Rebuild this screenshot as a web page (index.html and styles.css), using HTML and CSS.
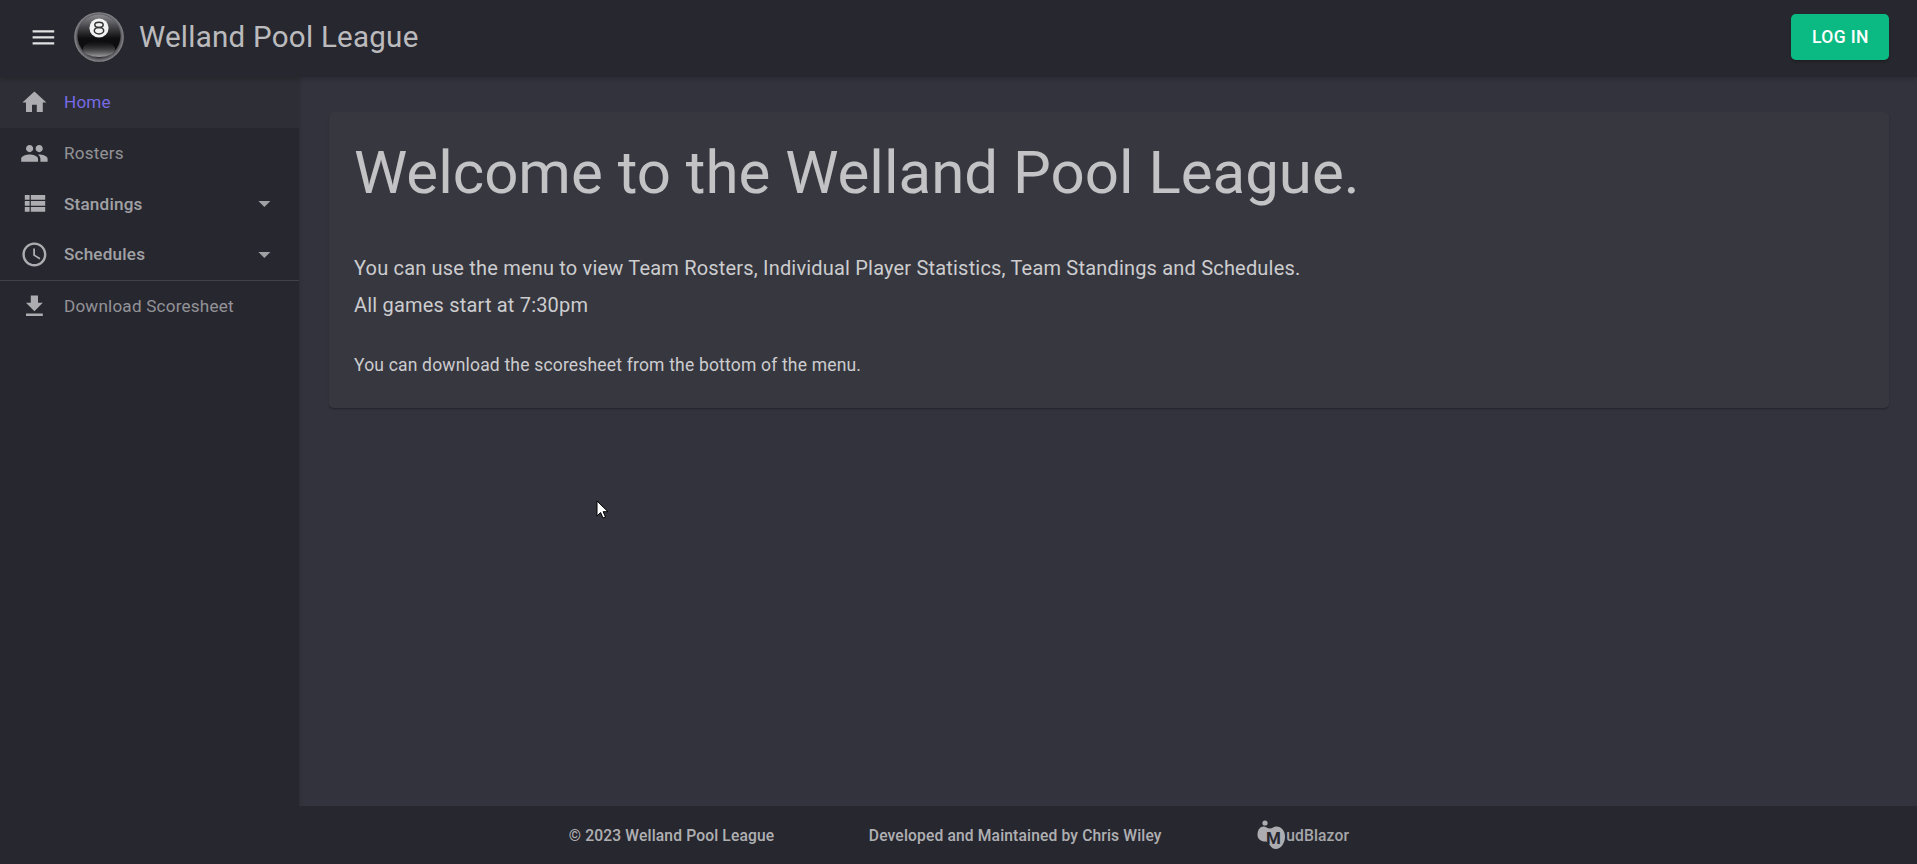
FILE: index.html
```html
<!DOCTYPE html>
<html lang="en">
<head>
<meta charset="utf-8">
<title>Welland Pool League</title>
<link rel="stylesheet" href="styles.css">
</head>
<body>
<div class="app">
  <header class="appbar">
    <button class="menu-btn" aria-label="Menu">
      <svg class="icon bar-icon" viewBox="0 0 24 24"><path d="M3 18h18v-2H3v2zm0-5h18v-2H3v2zm0-7v2h18V6H3z"/></svg>
    </button>
    <svg class="ball" viewBox="0 0 50 50" aria-hidden="true">
      <defs>
        <radialGradient id="ballRim" cx="50%" cy="50%" r="50%">
          <stop offset="0.86" stop-color="#4a4a4e"/>
          <stop offset="1" stop-color="#8c8c90"/>
        </radialGradient>
        <linearGradient id="ballShine" x1="0" y1="0" x2="0" y2="1">
          <stop offset="0" stop-color="#8a8a8e"/>
          <stop offset="0.28" stop-color="#48484c"/>
          <stop offset="0.56" stop-color="#0e0e10"/>
          <stop offset="1" stop-color="#0c0c0e"/>
        </linearGradient>
        <linearGradient id="ballGlow" x1="0" y1="0" x2="0" y2="1">
          <stop offset="0" stop-color="#333" stop-opacity="0"/>
          <stop offset="1" stop-color="#a0a0a4"/>
        </linearGradient>
      </defs>
      <circle cx="25" cy="25" r="24.800" fill="url(#ballRim)"/>
      <circle cx="25" cy="24" r="21.500" fill="url(#ballShine)"/>
      <ellipse cx="25" cy="37" rx="16" ry="8" fill="url(#ballGlow)"/>
      <circle cx="25" cy="16" r="9.600" fill="#f2f2f2"/>
      <ellipse cx="25" cy="12.800" rx="4.200" ry="2.600" fill="none" stroke="#333" stroke-width="1.500"/>
      <ellipse cx="25" cy="18.700" rx="4.700" ry="3.200" fill="none" stroke="#333" stroke-width="1.500"/>
    </svg>
    <span class="brand">Welland Pool League</span>
    <a class="login" href="#">Log in</a>
  </header>

  <nav class="drawer">
    <a class="nav-row active" href="#">
      <svg class="icon" viewBox="0 0 24 24"><path d="M10 20v-6h4v6h5v-8h3L12 3 2 12h3v8z"/></svg>
      <span class="nav-text">Home</span>
    </a>
    <a class="nav-row" href="#">
      <svg class="icon" viewBox="0 0 24 24"><path d="M16 11c1.66 0 2.99-1.34 2.99-3S17.66 5 16 5c-1.66 0-3 1.34-3 3s1.34 3 3 3zm-8 0c1.66 0 2.99-1.34 2.99-3S9.66 5 8 5C6.34 5 5 6.34 5 8s1.34 3 3 3zm0 2c-2.33 0-7 1.17-7 3.5V19h14v-2.5c0-2.33-4.67-3.5-7-3.5zm8 0c-.29 0-.62.02-.97.05 1.16.84 1.97 1.97 1.97 3.45V19h6v-2.5c0-2.33-4.67-3.5-7-3.5z"/></svg>
      <span class="nav-text">Rosters</span>
    </a>
    <a class="nav-row" href="#">
      <svg class="icon" viewBox="0 0 24 24"><path d="M4 14h4v-4H4v4zm0 5h4v-4H4v4zM4 9h4V5H4v4zm5 5h12v-4H9v4zm0 5h12v-4H9v4zM9 5v4h12V5H9z"/></svg>
      <span class="nav-text group">Standings</span>
      <svg class="icon caret" viewBox="0 0 24 24"><path d="M7 10l5 5 5-5z"/></svg>
    </a>
    <a class="nav-row" href="#">
      <svg class="icon" viewBox="0 0 24 24"><path d="M11.99 2C6.47 2 2 6.48 2 12s4.47 10 9.99 10C17.52 22 22 17.52 22 12S17.52 2 11.99 2zM12 20c-4.42 0-8-3.58-8-8s3.58-8 8-8 8 3.58 8 8-3.58 8-8 8zm.5-13H11v6l5.25 3.15.75-1.23-4.5-2.67z"/></svg>
      <span class="nav-text group">Schedules</span>
      <svg class="icon caret" viewBox="0 0 24 24"><path d="M7 10l5 5 5-5z"/></svg>
    </a>
    <hr class="nav-divider">
    <a class="nav-row" href="#">
      <svg class="icon" viewBox="0 0 24 24"><path d="M19 9h-4V3H9v6H5l7 7 7-7zM5 18v2h14v-2H5z"/></svg>
      <span class="nav-text">Download Scoresheet</span>
    </a>
  </nav>

  <main class="content">
    <section class="card">
      <h1 class="headline">Welcome to the Welland Pool League.</h1>
      <p class="body-lg first">You can use the menu to view Team Rosters, Individual Player Statistics, Team Standings and Schedules.</p>
      <p class="body-lg">All games start at 7:30pm</p>
      <p class="body-sm">You can download the scoresheet from the bottom of the menu.</p>
    </section>
  </main>

  <footer class="footer">
    <span>© 2023 Welland Pool League</span>
    <span>Developed and Maintained by Chris Wiley</span>
    <span class="mud">
      <svg class="mud-logo" viewBox="0 0 30 30" aria-hidden="true">
        <circle cx="8" cy="3" r="2.600" fill="#adadb1"/>
        <path d="M0.500 15c0-5 2.500-8.500 6-8.500 2.500 0 3.500 2 6.500 2 2.500 0 3.500-2 6.500-2 5 0 8.500 4.500 8.500 10 0 7-4.500 12.500-9 12.500-5 0-6.500-5-8-6.500-1-1-2-1-3-1-4 0-7.500-2.500-7.500-6.500z" fill="#adadb1"/>
        <text x="16.500" y="23.500" class="mud-m">M</text>
      </svg><span>udBlazor</span>
    </span>
  </footer>
</div>
<svg class="cursor" viewBox="0 0 12 19" aria-hidden="true"><path d="M1 1v15l3.600-3.500 2.400 5.500 2.500-1-2.400-5.300H12z" fill="#fff" stroke="#000" stroke-width="1"/></svg>
</body>
</html>
```

FILE: styles.css
```css
* { box-sizing: border-box; }
html, body { margin: 0; height: 100%; overflow: hidden; }
body {
  font-family: Roboto, "Liberation Sans", sans-serif;
  background: #32333d;
  color: rgba(255,255,255,.7);
}
.app {
  display: grid;
  grid-template-columns: 299px 1fr;
  grid-template-rows: 77px 1fr 58px;
  height: 864px;
}
.icon { width: 28.8px; height: 28.8px; fill: currentColor; flex: none; display: block; }

.appbar {
  grid-column: 1 / -1;
  display: flex;
  align-items: center;
  background: #27272f;
  padding: 0 27.6px 3px 29.4px;
  box-shadow: 0 2px 5px rgba(0,0,0,.2);
  position: relative;
  z-index: 2;
}
.menu-btn { background: none; border: 0; padding: 0; color: #e2e2e4; display: flex; width: 29px; }
.ball { width: 50px; height: 50px; margin-left: 16px; margin-top: -1px; flex: none; }
.brand { font-size: 29.5px; line-height: 1.6; margin: 1px 0 0 14.5px; letter-spacing: .009em; color: rgba(255,255,255,.7); }
.login {
  margin-left: auto;
  background: #0bba83;
  color: #fff;
  font-size: 17.5px;
  font-weight: 500;
  text-transform: uppercase;
  text-decoration: none;
  letter-spacing: .02em;
  height: 46px;
  width: 98px;
  display: flex;
  align-items: center;
  justify-content: center;
  border-radius: 4.8px;
  box-shadow: 0 3px 2px -2px rgba(0,0,0,.2), 0 2px 3px rgba(0,0,0,.14);
}

.drawer {
  background: #27272f;
  display: flex;
  flex-direction: column;
  box-shadow: 0 1px 4px rgba(0,0,0,.18);
  z-index: 1;
}
.nav-row {
  display: flex;
  align-items: center;
  height: 50.7px;
  padding: 0 20.5px 0 19.7px;
  color: #adadb1;
  text-decoration: none;
  flex: none;
}
.nav-row.active { background: rgba(255,255,255,.035); }
.nav-row.active .nav-text { color: #776be7; }
.nav-text {
  margin-left: 15.5px;
  font-size: 17.1px;
  letter-spacing: .012em;
  color: rgba(255,255,255,.5);
}
.nav-text.group { font-weight: 500; color: rgba(255,255,255,.58); }
.caret { margin-left: auto; color: #a0a0a5; }
.nav-divider { margin: 0; border: 0; border-top: 1px solid rgba(255,255,255,.12); height: 0; }

.content { padding: 35px 27.6px 0 30px; min-width: 0; }
.card {
  background: #373740;
  border-radius: 4.8px;
  box-shadow: 0 2px 2px -1px rgba(0,0,0,.2), 0 1px 2px rgba(0,0,0,.14);
  height: 296px;
  padding: 26px 25px 0;
}
.headline { margin: 0; font-size: 60px; font-weight: 400; line-height: 70px; color: rgba(255,255,255,.7); }
.body-lg { margin: 0; font-size: 20px; line-height: 37px; letter-spacing: .00938em; color: rgba(255,255,255,.75); }
.body-lg.first { margin-top: 42px; }
.body-sm { margin: 23px 0 0; font-size: 17.5px; line-height: 37px; letter-spacing: .01071em; color: rgba(255,255,255,.75); }

.footer {
  grid-column: 1 / -1;
  background: #27272f;
  display: flex;
  justify-content: center;
  align-items: center;
  gap: 94.5px;
  padding: 2px 0 0 1px;
  font-size: 15.6px;
  font-weight: 500;
  letter-spacing: .01em;
  color: rgba(255,255,255,.65);
  position: relative;
  z-index: 2;
}
.mud { display: flex; align-items: center; color: rgba(255,255,255,.6); }
.mud-logo { width: 30px; height: 30px; flex: none; margin: -2px -1px 0 1px; }
.mud-m { font-size: 17px; font-weight: 700; fill: #27272f; text-anchor: middle; font-family: Roboto, sans-serif; }

.cursor { position: absolute; left: 596px; top: 500px; width: 12px; height: 19px; z-index: 5; }
```
